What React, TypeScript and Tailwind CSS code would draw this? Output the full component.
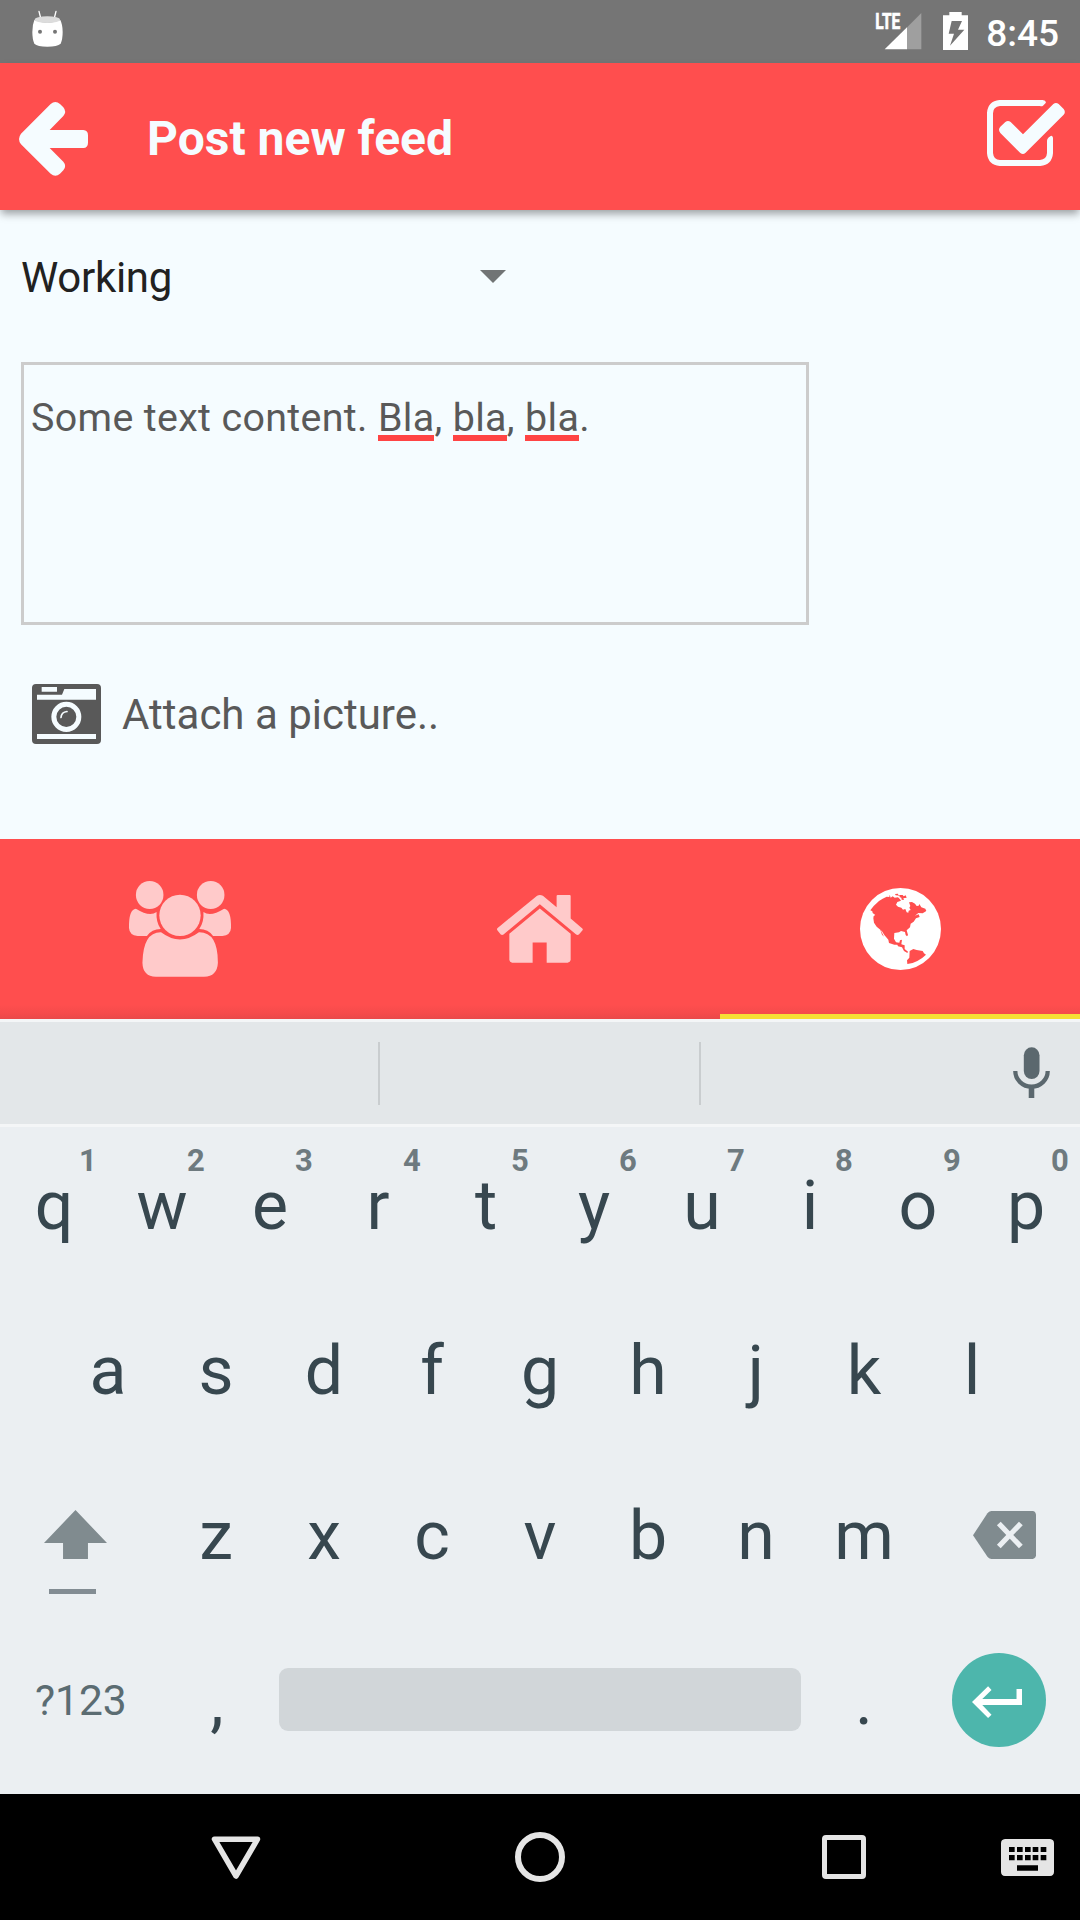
import React from "react";

type IconProps = {
  box: string;
  w: number;
  h: number;
  className?: string;
  children: React.ReactNode;
};

function Icon({ box, w, h, className = "", children }: IconProps) {
  return (
    <svg
      viewBox={box}
      width={w}
      height={h}
      preserveAspectRatio="none"
      fill="currentColor"
      className={`block shrink-0 overflow-visible ${className}`}
    >
      {children}
    </svg>
  );
}

function StatusBar() {
  return (
    <div className="flex h-[63px] shrink-0 items-start bg-[#757575] text-white">
      <Icon box="96 30 93 111" w={31} h={37} className="mt-[10px] ml-8">
        <path
          d="M117 34l5 20M168 34l-5 20"
          stroke="currentColor"
          strokeWidth="4"
          strokeLinecap="round"
        />
        <path d="M103 60Q142 76 181 60Q188 74 188 96Q188 118 182 131Q172 140 142 140Q112 140 103 131Q97 118 97 96Q97 74 103 60Z" />
        <ellipse cx="142" cy="59" rx="38" ry="10" fill="#dcdcdc" />
        <circle cx="120" cy="95" r="6" fill="#757575" />
        <circle cx="165" cy="95" r="6" fill="#757575" />
      </Icon>
      <Icon box="84 18 162 132" w={54} h={44} className="mt-[6px] ml-auto">
        <text
          x="106"
          y="87"
          fontFamily="Roboto"
          fontWeight="700"
          fontSize="66"
          textLength="75"
          lengthAdjust="spacingAndGlyphs"
          stroke="currentColor"
          strokeWidth="2"
        >
          LTE
        </text>
        <path d="M244 39V148H200V83Z" fill="#9f9f9f" />
        <path d="M201 82V148H134Z" />
      </Icon>
      <Icon box="309 36 75 114" w={25} h={38} className="mt-3 ml-[21px]">
        <path d="M309 46H328V36H365V46H384V150H309Z" />
        <path d="M335 63H366L354 89H373L330 137L342 101H326Z" fill="#757575" />
      </Icon>
      <div className="mr-[21px] ml-[18px] pt-[11px] text-[37px] leading-[46px] font-medium">
        8:45
      </div>
    </div>
  );
}

function Toolbar() {
  return (
    <div className="z-10 flex h-[147px] shrink-0 items-start bg-[#ff4e4e] text-[#f5fcff] shadow-[0_5px_8px_-1px_rgba(0,0,0,0.36)]">
      <Icon box="57 306 207 222" w={69} h={74} className="mt-[39px] ml-[19px]">
        <path d="M63 401L152 312Q166 300 180 312L190 322Q201 335 190 348L149 390H250Q264 391 264 406V428Q264 443 250 444H149L190 485Q201 498 190 511L180 521Q166 533 152 521L63 433Q51 417 63 401Z" />
      </Icon>
      <h1 className="mt-[46px] ml-[59px] text-[48px] leading-[60px] font-bold">
        Post new feed
      </h1>
      <Icon box="441 300 234 198" w={78} h={66} className="mt-[37px] mr-[15px] ml-auto">
        <path d="M478 300H608Q620 302 617 309L609 317Q605 320 600 318H480Q459 320 459 340V459Q461 480 480 480H600Q620 478 621 459V422Q621 417 625 413L632 408Q637 406 639 413V460Q636 495 601 498H479Q444 495 441 460V338Q444 303 478 300Z" />
        <path d="M481 380L496 366Q504 360 512 366L549 403L640 312Q648 306 656 312L671 327Q678 336 671 344L556 459Q549 465 541 459L481 399Q473 389 481 380Z" />
      </Icon>
    </div>
  );
}

const misspelled = "border-b-[6px] border-[#ff4444]";

function Content() {
  return (
    <div className="flex h-[629px] shrink-0 flex-col items-start bg-[#f5fcff] text-[#595959]">
      <div className="mt-[38px] flex h-[60px] w-[506px] items-start justify-between pl-[21px] text-[#212121]">
        <span className="text-[42px] leading-[60px] tracking-[-0.3px]">Working</span>
        <Icon box="0 0 26 13" w={26} h={13} className="mt-[22px] text-[#717475]">
          <path d="M0 0H26L13 13Z" />
        </Icon>
      </div>
      <div className="mt-[54px] ml-[21px] flex h-[263px] w-[788px] items-start border-[3px] border-[#cccccc] pt-[29px] pl-[7px]">
        <p className="flex text-[39.4px] leading-[47px] tracking-[0.34px] whitespace-pre">
          <span>Some text content. </span>
          <span className={`h-[47px] leading-[47px] ${misspelled}`}>Bla</span>
          <span>, </span>
          <span className={`h-[47px] leading-[47px] ${misspelled}`}>bla</span>
          <span>, </span>
          <span className={`h-[47px] leading-[47px] ${misspelled}`}>bla</span>
          <span>.</span>
        </p>
      </div>
      <div className="mt-[58px] ml-8 flex items-start">
        <Icon box="96 250 207 179" w={69} h={60} className="mt-px">
          <path
            fillRule="evenodd"
            d="M108 250H291Q303 250 303 262V417Q303 429 291 429H108Q96 429 96 417V262Q96 250 108 250ZM125 259V273H171V259ZM111 282V297H288V265H193L186 282ZM111 399V414H288V399ZM199 303A45 45 0 1 0 199 393A45 45 0 1 0 199 303ZM199 318A30 30 0 1 1 199 378A30 30 0 1 1 199 318Z"
          />
          <path
            d="M183 350Q184 334 201 332"
            fill="none"
            stroke="#f5fcff"
            strokeWidth="5"
            strokeLinecap="round"
          />
        </Icon>
        <span className="mt-[2px] ml-[21px] text-[42px] leading-[60px]">Attach a picture..</span>
      </div>
    </div>
  );
}

function Tabs() {
  return (
    <div className="grid h-[180px] shrink-0 grid-cols-3 bg-[linear-gradient(to_bottom,#ff4e4e_92%,#f54b4b_97%,#e94949)] text-[#ffcaca]">
      <div className="flex items-start justify-center">
        <Icon box="142 153 296 288" w={102} h={96} className="mt-[42px]">
          <ellipse cx="202" cy="195" rx="40" ry="42" />
          <ellipse cx="379" cy="195" rx="40" ry="42" />
          <ellipse cx="290" cy="256" rx="60" ry="62" />
          <path d="M162 236Q201 261 222 246Q220 277 234 297Q208 297 194 318H167Q143 315 142 294Q141 238 162 236Z" />
          <path d="M418 236Q379 261 358 246Q360 277 346 297Q372 297 386 318H413Q437 315 438 294Q439 238 418 236Z" />
          <path d="M235 307Q290 350 345 307Q400 306 400 398Q398 439 360 440H220Q182 439 181 398Q183 306 235 307Z" />
        </Icon>
      </div>
      <div className="flex items-start justify-center">
        <Icon box="1211 195 251 205" w={86} h={68} className="mt-[56px]">
          <path d="M1328 197Q1336 193 1345 197L1385 232V198Q1385 195 1388 195H1423Q1426 195 1426 198V266L1460 296Q1463 299 1460 302L1450 314Q1446 317 1442 314L1336 223L1230 314Q1226 317 1222 314L1212 301Q1210 298 1212 295Z" />
          <path d="M1336 236L1426 312V391Q1425 398 1417 399H1356V338H1315V399H1255Q1248 398 1247 391V312Z" />
        </Icon>
      </div>
      <div className="flex items-start justify-center border-b-[5px] border-[#f6df35] text-white">
        <Icon box="480 174 243 246" w={81} h={82} className="mt-[49px]">
          <ellipse cx="601.5" cy="297" rx="121.5" ry="123" />
          <g fill="#ff4e4e">
            <path d="M511 241L521 228L537 213L548 206L560 200L568 201L569 194L572 203L578 199L584 203L594 202L600 208L603 212L592 216L588 224L594 230L604 233L609 239L616 237L620 247L625 248L626 242L632 240L628 233L631 228L627 217L636 216L645 221L650 228L656 227L658 222L664 232L676 236L679 243L668 250L655 249L645 257L656 253L659 261L648 265L641 275L632 281L630 292L620 301L624 315L621 319L617 315L615 306L603 303L597 307L583 309L582 326L588 337L598 338L600 331L606 329L604 343L614 346L614 357L624 365L622 369L612 363L606 352L594 349L592 344L583 344L567 339L565 329L553 315L545 302L543 302L552 320L546 314L541 299L530 290L522 278L520 265L521 258L526 255L518 249L517 244Z" />
            <path d="M585 192L594 191L595 195L608 195L611 199L617 196L620 203L610 205L612 210L605 209L604 203L598 201L600 197L587 196Z" />
            <path d="M629 363L640 357L650 360L668 363L672 370L678 374Q655 397 622 402L621 391L628 383Z" />
          </g>
        </Icon>
      </div>
    </div>
  );
}

const topRow = ["q", "w", "e", "r", "t", "y", "u", "i", "o", "p"];
const hints = ["1", "2", "3", "4", "5", "6", "7", "8", "9", "0"];
const homeRow = ["a", "s", "d", "f", "g", "h", "j", "k", "l"];
const bottomRow = ["z", "x", "c", "v", "b", "n", "m"];

function Key({ label, hint }: { label: string; hint?: string }) {
  return (
    <div className="relative h-[165px] w-[108px] shrink-0 text-center text-[68px] leading-[158px]">
      {label}
      {hint && (
        <span className="absolute top-0 right-0 w-10 text-center text-[31px] leading-[67px] font-bold text-[#6e7a7f]">
          {hint}
        </span>
      )}
    </div>
  );
}

function Keyboard() {
  return (
    <div className="flex h-[775px] shrink-0 flex-col bg-[#ebeff2] text-[#37474f]">
      <div className="flex h-[108px] shrink-0 items-start border-t-[3px] border-b-[3px] border-[#f4f6f7] bg-[#e3e7e9]">
        <div className="mt-5 h-[63px] w-[380px] border-r-2 border-[#c9cdcf]" />
        <div className="mt-5 h-[63px] w-[321px] border-r-2 border-[#c9cdcf]" />
        <Icon box="939 651 113 153" w={37} h={51} className="mt-[25px] mr-[30px] ml-auto text-[#5b686e]">
          <rect x="972" y="652" width="48" height="95" rx="24" />
          <path
            d="M946 723A49.500 47 0 0 0 1045 723"
            fill="none"
            stroke="currentColor"
            strokeWidth="13"
          />
          <rect x="987" y="770" width="17" height="34" />
        </Icon>
      </div>
      <div className="flex">
        {topRow.map((k, i) => (
          <Key key={k} label={k} hint={hints[i]} />
        ))}
      </div>
      <div className="flex justify-center">
        {homeRow.map((k) => (
          <Key key={k} label={k} />
        ))}
      </div>
      <div className="flex">
        <div className="flex h-[165px] w-[162px] flex-col items-start text-[#808b8f]">
          <Icon box="129 150 182 147" w={63} h={49} className="mt-[53px] ml-[44px]">
            <path d="M220 150L311 249H256V297H184V249H129Z" />
          </Icon>
          <div className="mt-[30px] ml-[49px] h-[5px] w-[47px] bg-[#828c93]" />
        </div>
        {bottomRow.map((k) => (
          <Key key={k} label={k} />
        ))}
        <div className="flex h-[165px] w-[162px] items-start">
          <Icon box="1257 152 183 143" w={63} h={48} className="mt-[54px] ml-[55px] text-[#808b8f]">
            <path d="M1310 152H1430Q1439 153 1440 163V284Q1439 294 1430 295H1310Q1303 294 1299 288L1257 224L1299 159Q1303 153 1310 152Z" />
            <path d="M1332 189L1396 258M1396 189L1332 258" stroke="#ebeff2" strokeWidth="15" />
          </Icon>
        </div>
      </div>
      <div className="flex">
        <div className="h-[165px] w-[163px] pl-[35px] text-[42.500px] leading-[158px] text-[#5b6c72]">
          ?123
        </div>
        <Key label="," />
        <div className="mt-[46px] ml-[8px] h-[63px] w-[522px] rounded-[9px] bg-[#d1d6d9]" />
        <div className="ml-[9px]">
          <Key label="." />
        </div>
        <div className="mt-[31px] ml-[34px] flex h-[94px] w-[94px] items-start rounded-full bg-[#4db6ac] text-white">
          <Icon box="1255 678 146 96" w={50} h={32} className="mt-[33px] ml-[20px]">
            <path d="M1385 687H1401V735H1285L1312 764L1302 774L1255 726L1302 679L1312 690L1285 717H1385Z" />
          </Icon>
        </div>
      </div>
    </div>
  );
}

function NavBar() {
  return (
    <div className="flex h-[126px] shrink-0 items-center bg-black text-[#e5e5e5]">
      <Icon box="0 0 50 43" w={50} h={43} className="ml-[211px]">
        <path
          d="M3.500 3.200H46.500L25 40Z"
          fill="none"
          stroke="currentColor"
          strokeWidth="5.500"
          strokeLinejoin="round"
        />
      </Icon>
      <div className="ml-[254px] h-[50px] w-[50px] rounded-full border-[6px] border-[#e5e5e5]" />
      <div className="ml-[257px] h-[44px] w-[44px] rounded-[4px] border-[5px] border-[#e5e5e5]" />
      <Icon box="663 117 159 111" w={53} h={37} className="ml-[135px]">
        <path
          fillRule="evenodd"
          d="M675 117H810Q822 118 822 130V215Q822 227 810 228H675Q663 227 663 215V130Q663 118 675 117ZM687 141V156H704V141ZM711 141V156H728V141ZM735 141V156H752V141ZM758 141V156H775V141ZM782 141V156H799V141ZM687 165V181H704V165ZM711 165V181H728V165ZM735 165V181H752V165ZM758 165V181H775V165ZM782 165V181H799V165ZM711 196V212H774V196Z"
        />
      </Icon>
    </div>
  );
}

export default function App() {
  return (
    <div className="flex h-[1920px] w-[1080px] flex-col overflow-hidden font-[Roboto,sans-serif]">
      <StatusBar />
      <Toolbar />
      <Content />
      <Tabs />
      <Keyboard />
      <NavBar />
    </div>
  );
}
